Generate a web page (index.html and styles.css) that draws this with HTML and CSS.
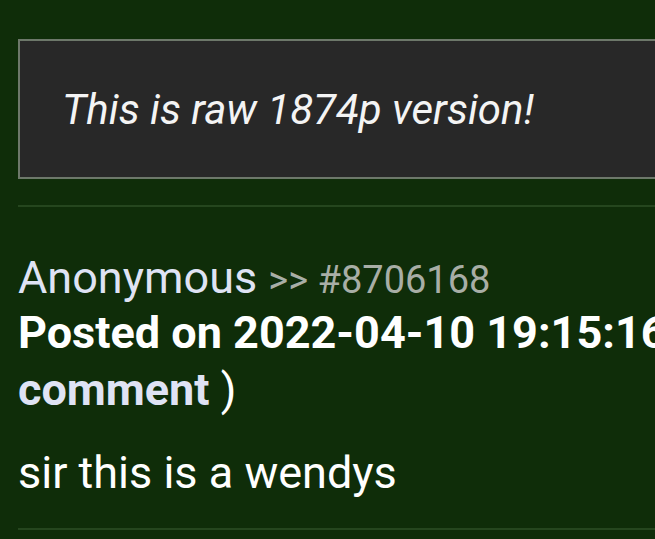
FILE: index.html
```html
<!DOCTYPE html>
<html>
<head>
<meta charset="utf-8">
<link rel="stylesheet" href="styles.css">
</head>
<body>
<div class="page">
  <div class="notice"><em>This is raw 1874p version!</em></div>
  <div class="divider"></div>
  <div class="post">
    <div class="post-head"><span class="name">Anonymous</span> <span class="ref">&gt;&gt; #8706168</span></div>
    <div class="post-meta">Posted on 2022-04-10 19:15:16 ( <a class="link">reply</a> ) ( <a class="link">comment</a> <span class="paren">)</span></div>
    <div class="post-body">sir this is a wendys</div>
  </div>
  <div class="divider"></div>
</div>
</body>
</html>
```

FILE: styles.css
```css
html, body {
  margin: 0;
  padding: 0;
  background: #0f2d09;
  overflow: hidden;
}
body {
  width: 655px;
  height: 539px;
  font-family: Roboto, "Liberation Sans", sans-serif;
  color: #ffffff;
}
.page {
  width: 1000px;
  padding: 39px 0 0 18px;
}
.notice {
  height: 136px;
  border: 2px solid #6d786a;
  background: #282828;
  display: flex;
  align-items: center;
  padding-left: 42px;
  font-size: 42px;
  color: #f4f4f4;
}
.notice em {
  font-style: italic;
}
.divider {
  height: 2px;
  background: #25461e;
  margin-top: 26px;
}
.post {
  padding-top: 45px;
}
.post-head {
  font-size: 45px;
  line-height: 52px;
  height: 52px;
  white-space: nowrap;
}
.name {
  color: #dfe3f4;
}
.ref {
  font-size: 38px;
  color: #a8aea6;
}
.post-meta {
  width: 880px;
  font-size: 45px;
  line-height: 57px;
  font-weight: bold;
  color: #ffffff;
}
.link {
  color: #dfe3f4;
}
.paren {
  font-weight: normal;
}
.post-body {
  margin-top: 26px;
  font-size: 45px;
  line-height: 57px;
  color: #ffffff;
}
.post + .divider {
  margin-top: 27px;
}
```
